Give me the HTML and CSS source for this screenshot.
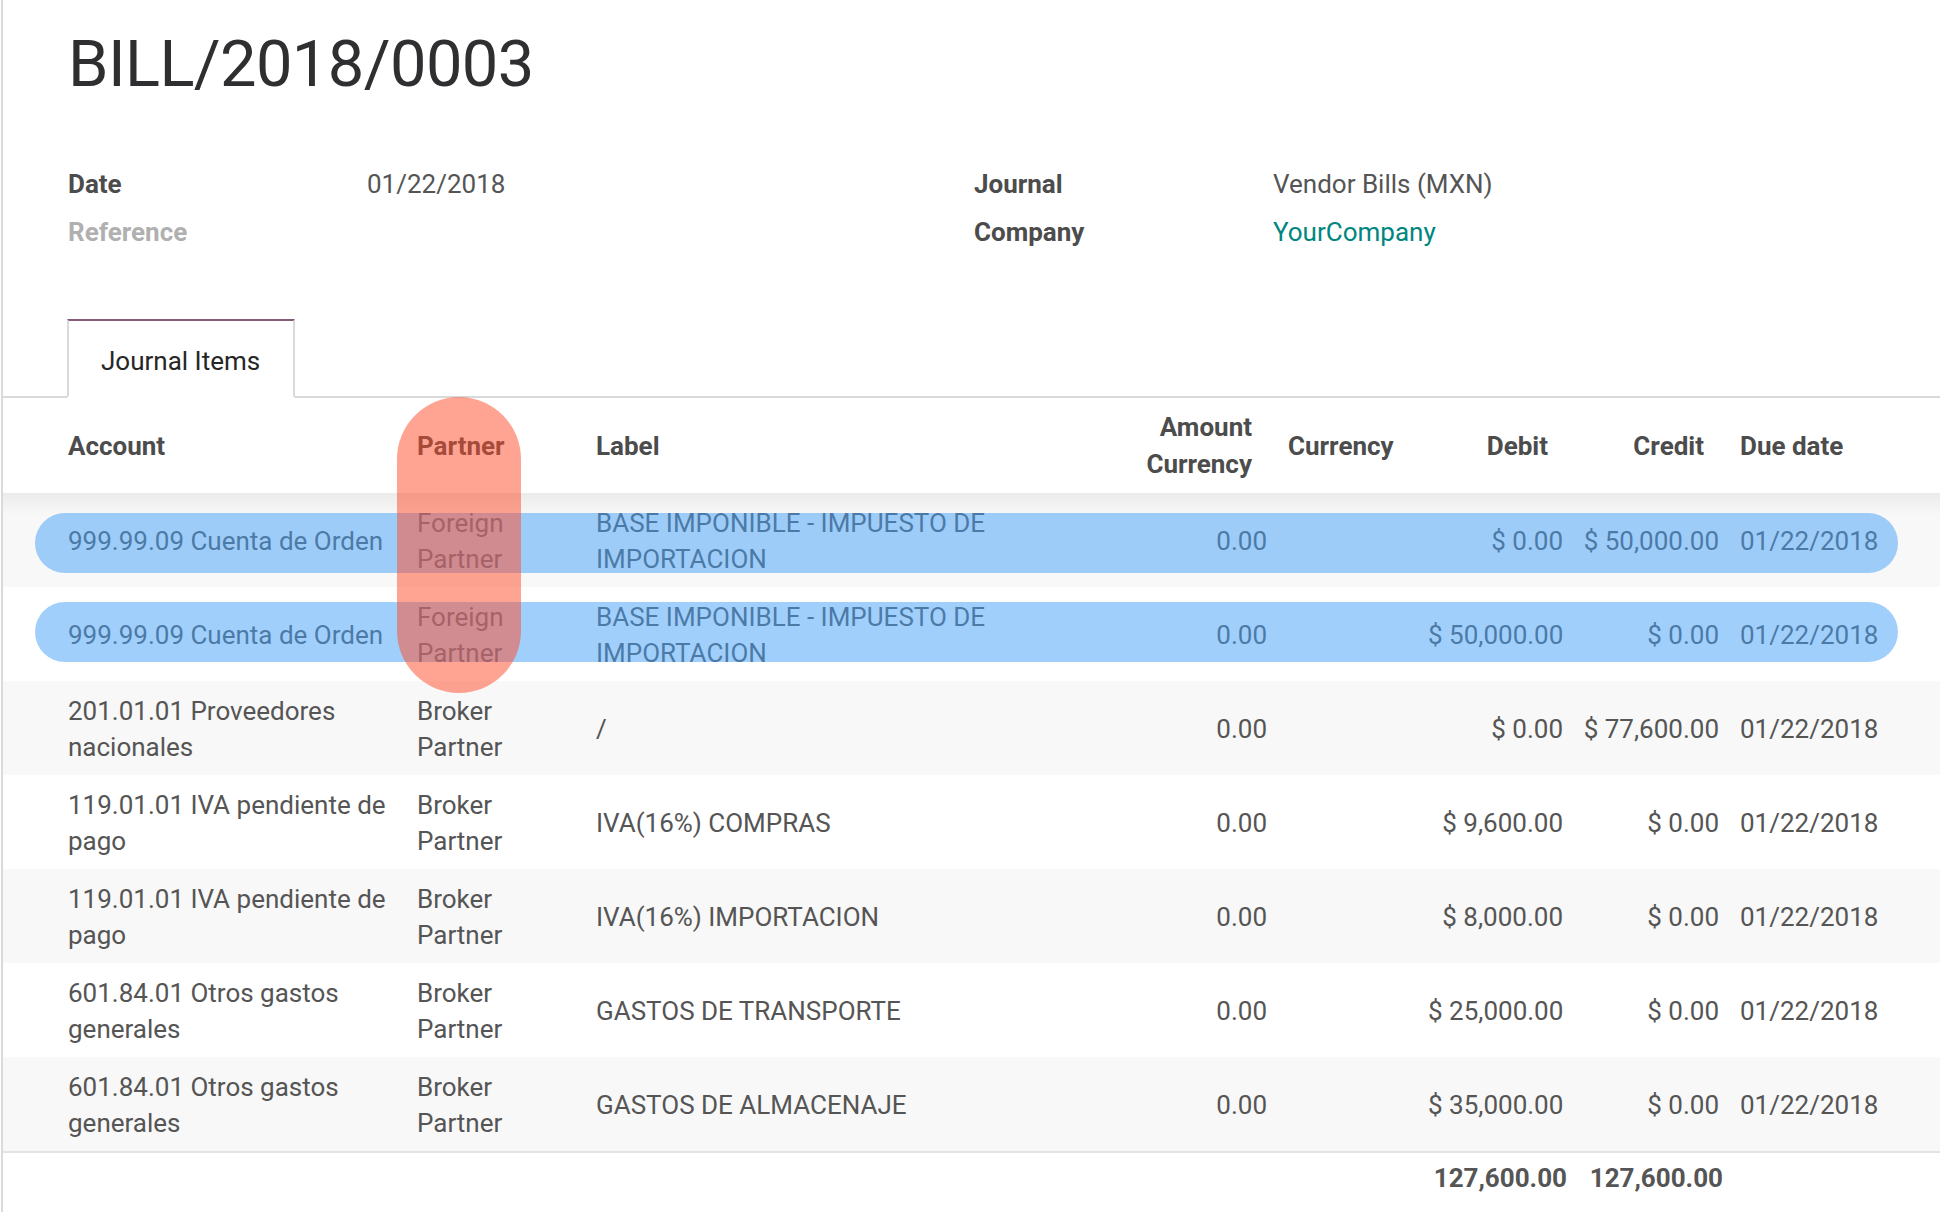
FILE: index.html
```html
<!DOCTYPE html>
<html lang="en">
<head>
<meta charset="utf-8">
<title>BILL/2018/0003</title>
<link rel="stylesheet" href="styles.css">
</head>
<body>
<div class="sheet">
  <h1 class="title">BILL/2018/0003</h1>

  <div class="groups">
    <div class="group">
      <div class="lbl">Date</div><div class="val">01/22/2018</div>
      <div class="lbl lbl-empty">Reference</div><div class="val"></div>
    </div>
    <div class="group">
      <div class="lbl">Journal</div><div class="val">Vendor Bills (MXN)</div>
      <div class="lbl">Company</div><div class="val link">YourCompany</div>
    </div>
  </div>

  <ul class="tabs">
    <li class="tab active">Journal Items</li>
  </ul>

  <table class="lines">
    <colgroup>
      <col class="c-account"><col class="c-partner"><col class="c-label"><col class="c-amount">
      <col class="c-currency"><col class="c-debit"><col class="c-credit"><col class="c-date">
    </colgroup>
    <thead>
      <tr>
        <th class="first">Account</th>
        <th>Partner</th>
        <th>Label</th>
        <th class="num amount">Amount Currency</th>
        <th>Currency</th>
        <th class="num">Debit</th>
        <th class="num">Credit</th>
        <th class="date">Due date</th>
      </tr>
    </thead>
    <tbody>
      <tr>
        <td class="first">999.99.09 Cuenta de Orden</td>
        <td>Foreign Partner</td>
        <td>BASE IMPONIBLE - IMPUESTO DE IMPORTACION</td>
        <td class="num amount">0.00</td>
        <td></td>
        <td class="num">$&nbsp;0.00</td>
        <td class="num">$&nbsp;50,000.00</td>
        <td class="date">01/22/2018</td>
      </tr>
      <tr>
        <td class="first">999.99.09 Cuenta de Orden</td>
        <td>Foreign Partner</td>
        <td>BASE IMPONIBLE - IMPUESTO DE IMPORTACION</td>
        <td class="num amount">0.00</td>
        <td></td>
        <td class="num">$&nbsp;50,000.00</td>
        <td class="num">$&nbsp;0.00</td>
        <td class="date">01/22/2018</td>
      </tr>
      <tr>
        <td class="first">201.01.01 Proveedores nacionales</td>
        <td>Broker Partner</td>
        <td>/</td>
        <td class="num amount">0.00</td>
        <td></td>
        <td class="num">$&nbsp;0.00</td>
        <td class="num">$&nbsp;77,600.00</td>
        <td class="date">01/22/2018</td>
      </tr>
      <tr>
        <td class="first">119.01.01 IVA pendiente de pago</td>
        <td>Broker Partner</td>
        <td>IVA(16%) COMPRAS</td>
        <td class="num amount">0.00</td>
        <td></td>
        <td class="num">$&nbsp;9,600.00</td>
        <td class="num">$&nbsp;0.00</td>
        <td class="date">01/22/2018</td>
      </tr>
      <tr>
        <td class="first">119.01.01 IVA pendiente de pago</td>
        <td>Broker Partner</td>
        <td>IVA(16%) IMPORTACION</td>
        <td class="num amount">0.00</td>
        <td></td>
        <td class="num">$&nbsp;8,000.00</td>
        <td class="num">$&nbsp;0.00</td>
        <td class="date">01/22/2018</td>
      </tr>
      <tr>
        <td class="first">601.84.01 Otros gastos generales</td>
        <td>Broker Partner</td>
        <td>GASTOS DE TRANSPORTE</td>
        <td class="num amount">0.00</td>
        <td></td>
        <td class="num">$&nbsp;25,000.00</td>
        <td class="num">$&nbsp;0.00</td>
        <td class="date">01/22/2018</td>
      </tr>
      <tr>
        <td class="first">601.84.01 Otros gastos generales</td>
        <td>Broker Partner</td>
        <td>GASTOS DE ALMACENAJE</td>
        <td class="num amount">0.00</td>
        <td></td>
        <td class="num">$&nbsp;35,000.00</td>
        <td class="num">$&nbsp;0.00</td>
        <td class="date">01/22/2018</td>
      </tr>
    </tbody>
    <tfoot>
      <tr>
        <td class="first"></td><td></td><td></td><td></td><td></td>
        <td class="num total">127,600.00</td>
        <td class="num total">127,600.00</td>
        <td></td>
      </tr>
    </tfoot>
  </table>

  <div class="mark mark-row mark-row1"></div>
  <div class="mark mark-row mark-row2"></div>
  <div class="mark mark-col"></div>
</div>
</body>
</html>
```

FILE: styles.css
```css
html, body {
  margin: 0;
  padding: 0;
  background: #ffffff;
}

body {
  font-family: Roboto, "Liberation Sans", Arial, sans-serif;
  font-size: 26px;
  color: #555555;
}

.sheet {
  position: relative;
  margin-left: 1px;
  border-left: 2px solid #dadada;
  min-height: 1212px;
  overflow: hidden;
}

.title {
  margin: 26px 0 0 65px;
  font-size: 65px;
  font-weight: 400;
  line-height: 76px;
  letter-spacing: -0.6px;
  color: #2f2f32;
}

.groups {
  display: flex;
  margin: 58px 0 0 65px;
}

.group {
  width: 906px;
  display: grid;
  grid-template-columns: 299px 1fr;
  grid-auto-rows: 48px;
  line-height: 48px;
}

.lbl {
  font-weight: 700;
  color: #4c4c4c;
}

.lbl-empty {
  color: #b0b0b0;
}

.val {
  color: #555555;
}

.link {
  color: #00867f;
}

.tabs {
  list-style: none;
  margin: 63px 0 0 0;
  padding: 0 0 0 64px;
  display: flex;
  border-bottom: 2px solid #d9d9d9;
}

.tab {
  margin-bottom: -2px;
  border: 2px solid #d9d9d9;
  border-top-color: #875a7b;
  border-bottom-color: #ffffff;
  padding: 22px 33px 17px 32px;
  line-height: 36px;
  color: #262626;
  background: #ffffff;
}

.lines {
  width: 1937px;
  table-layout: fixed;
  border-collapse: collapse;
  border-spacing: 0;
}

.c-account { width: 406px; }
.c-partner { width: 179px; }
.c-label { width: 512px; }
.c-amount { width: 180px; }
.c-currency { width: 140px; }
.c-debit { width: 151px; }
.c-credit { width: 156px; }
.c-date { width: 213px; }

.lines th,
.lines td {
  padding: 12px 8px 10px 8px;
  line-height: 36px;
  vertical-align: middle;
  text-align: left;
}

.lines th {
  padding-top: 11px;
  padding-bottom: 10px;
  line-height: 37px;
  font-weight: 700;
  color: #4c4c4c;
}

.lines .first {
  padding-left: 65px;
}

.lines .num {
  text-align: right;
  white-space: nowrap;
}

.lines th.num {
  padding-right: 23px;
  white-space: normal;
}

.lines td.amount {
  padding-right: 13px;
}

.lines th.amount {
  padding-right: 28px;
}

.lines .date {
  padding-left: 13px;
  white-space: nowrap;
}

.lines tbody tr:nth-child(odd) {
  background: #f8f8f8;
}

.lines tbody tr:first-child {
  background: linear-gradient(#ebebeb, #f8f8f8 22px);
}

.lines tfoot td {
  border-top: 2px solid #e3e3e3;
  padding-top: 7px;
  padding-bottom: 11px;
  background: #ffffff;
}

.lines tfoot .total {
  padding-right: 4px;
  font-weight: 700;
  color: #555555;
}

.mark {
  position: absolute;
  pointer-events: none;
}

.mark-row {
  left: 32px;
  width: 1863px;
  height: 60px;
  border-radius: 30px;
  background: rgba(68, 160, 248, 0.5);
}

.mark-row1 { top: 513px; }
.mark-row2 { top: 602px; }

.mark-col {
  left: 394px;
  top: 397px;
  width: 124px;
  height: 296px;
  border-radius: 62px;
  background: rgba(255, 73, 39, 0.5);
}
```
